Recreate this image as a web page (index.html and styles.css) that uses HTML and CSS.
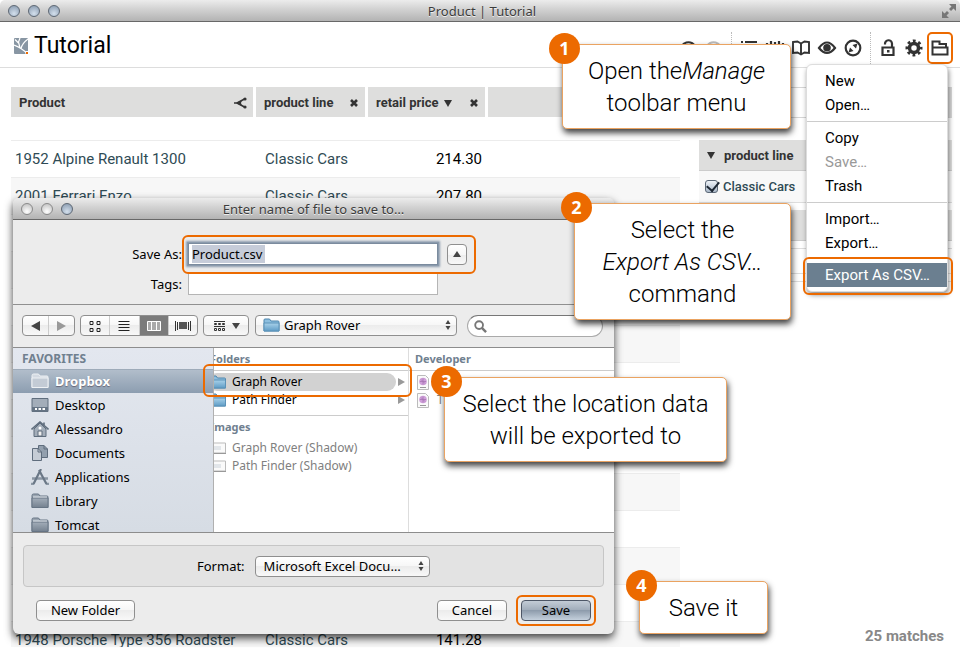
FILE: index.html
```html
<!DOCTYPE html>
<html lang="en">
<head>
<meta charset="utf-8">
<title>Product | Tutorial</title>
<link rel="stylesheet" href="styles.css">
</head>
<body>
<svg class="defs" aria-hidden="true">
  <defs>
    <linearGradient id="blue" x1="0" y1="0" x2="0" y2="1"><stop offset="0" stop-color="#a9d2ea"/><stop offset="1" stop-color="#5f9cc6"/></linearGradient>
    <linearGradient id="slate" x1="0" y1="0" x2="0" y2="1"><stop offset="0" stop-color="#a3adb9"/><stop offset="1" stop-color="#74818f"/></linearGradient>
    <symbol id="folder-slate" viewBox="0 0 18 16"><path d="M1 14.500V2.500Q1 1 2.500 1H7.500L9 3H16Q17 3 17 4V14.500Z" fill="#9aa5b1" stroke="#667484"/><path d="M1 5H17V14.500H1Z" fill="url(#slate)" stroke="#667484"/><path d="M2 4H16" stroke="#dfe4ea"/></symbol>
    <symbol id="folder-blue" viewBox="0 0 16 14"><path d="M.5 13V2Q.5 1 1.500 1H6L7.500 3H14.500Q15.500 3 15.500 4V13Z" fill="#8dbfdf" stroke="#4f86ad"/><path d="M.5 5H15.500V13H.5Z" fill="url(#blue)" stroke="#5b92b8"/></symbol>
    <symbol id="thumb" viewBox="0 0 16 12"><path d="M.5 1H15.500V11H.5Z" fill="#fafafa" stroke="#bbb"/><path d="M3 4H11V8H3Z" fill="#e2e6ea"/><path d="M0 11.500H16" stroke="#999"/></symbol>
    <symbol id="xmlfile" viewBox="0 0 12 15"><path d="M.5.5H8.500L11.500 3.500V14.500H.5Z" fill="#fafafa" stroke="#bbb"/><circle cx="6" cy="6.500" r="3.800" fill="#cf9fd9"/><path d="M6 3.500V9.500M3 6.500H9M4 4.500L8 8.500" stroke="#a674b3" stroke-width=".8"/><path d="M3 12.500H9" stroke="#999"/></symbol>
    <symbol id="updown" viewBox="0 0 6 10"><path d="M3 0L5.500 4H.5ZM3 10L.5 6H5.500Z" fill="#444"/></symbol>
  </defs>
</svg>

<header class="titlebar">
  <span class="lights"><i></i><i></i><i></i></span>
  <span class="title">Product | Tutorial</span>
  <svg class="expand" viewBox="0 0 14 14" aria-hidden="true"><path d="M7 0H14V7L11.500 4.500L9 7L7 5L9.500 2.500ZM7 14H0V7L2.500 9.500L5 7L7 9L4.500 11.500Z" fill="#777"/></svg>
</header>

<div class="toolbar">
  <svg class="logo" viewBox="0 0 14 16" aria-hidden="true"><rect width="14" height="16" rx="1" fill="#8896a3"/><path d="M13 15.500C10 12 5 9 0 7M7 10.500C8 6 10 4 14 1M6 10L4.500 4L6 0M4.500 5L1 1.500" fill="none" stroke="#fff" stroke-width="1.200"/><path d="M11.500 13H14V16H11.500Z" fill="#fff"/><path d="M12 14H14V16H12Z" fill="#ec6a00"/></svg>
  <h1>Tutorial</h1>
  <nav class="tools" aria-label="Toolbar">
    <button aria-label="Undo"><svg viewBox="0 0 20 20"><path d="M4 8A7 6 0 1 1 5 14" /></svg></button>
    <button aria-label="Redo" disabled><svg viewBox="0 0 20 20"><path d="M16 8A7 6 0 1 0 15 14"/></svg></button>
    <i class="sep"></i>
    <button aria-label="List"><svg viewBox="0 0 20 20"><path d="M2 4H4M6 4H18M2 10H4M6 10H18M2 16H4M6 16H18"/></svg></button>
    <button aria-label="Values"><svg viewBox="0 0 20 20"><path d="M2 5V15M6 3V15M10 4V15M14 3V15M18 5V15"/></svg></button>
    <button aria-label="Book"><svg viewBox="0 0 20 20"><path d="M2 4L6.500 3.500L10 5.500L13.500 3.500L18 4V15L13.500 14.500L10 16.500L6.500 14.500L2 15ZM10 5.500V16" stroke-width="1.900"/></svg></button>
    <button aria-label="View"><svg viewBox="0 0 20 20"><path d="M2 10Q10-1 18 10Q10 20 2 10Z"/><circle cx="10" cy="9.800" r="3.800" fill="#333" stroke="none"/></svg></button>
    <button aria-label="Explore"><svg viewBox="0 0 20 20"><circle cx="10" cy="10" r="7.300"/><path d="M14.500 5.500L13 10.500L9.500 7ZM5.500 14.500L7 9.500L10.500 13Z" fill="#333" stroke="none"/></svg></button>
    <i class="sep"></i>
    <button aria-label="Unlock"><svg viewBox="0 0 20 20"><path d="M4.500 9.500H15.500V17H4.500ZM7 6.500V6A3.500 3.500 0 0 1 14 5.500V9"/><path d="M9 12H11.500V14.500H9Z" fill="#333" stroke="none"/></svg></button>
    <button aria-label="Settings"><svg viewBox="0 0 20 20"><circle cx="10" cy="10" r="4.500" stroke-width="3.500"/><circle cx="10" cy="10" r="7" stroke-width="3" stroke-dasharray="2.750 2.750" stroke-dashoffset="1.370"/></svg></button>
    <div class="menu-anchor">
      <button class="manage" aria-label="Manage"><svg viewBox="0 0 20 20"><path d="M2.500 16.500V3.500H9.500V6H16V9M2.500 9.500H17.500V16.500H2.500Z" stroke-width="2"/></svg></button>
      <div class="menu" role="menu">
        <button role="menuitem">New</button>
        <button role="menuitem">Open…</button>
        <hr>
        <button role="menuitem">Copy</button>
        <button role="menuitem" disabled>Save…</button>
        <button role="menuitem">Trash</button>
        <hr>
        <button role="menuitem">Import…</button>
        <button role="menuitem">Export…</button>
        <button role="menuitem" class="active">Export As CSV…<span class="mark"></span></button>
      </div>
    </div>
  </nav>
</div>

<main class="content">
  <div class="grid-wrap">
    <table class="products">
      <colgroup><col class="c-product"><col class="c-line"><col class="c-price"><col></colgroup>
      <thead>
        <tr>
          <th scope="col"><div class="th">Product<svg class="share" viewBox="0 0 13 12" aria-hidden="true"><path d="M3 6L10.500 2M3 6L10.500 10M0 6H5" stroke="#333" stroke-width="1.500"/><path d="M2 6L8 3L7 6L8 9Z" fill="#333"/><circle cx="11" cy="2" r="1.600" fill="#333"/><circle cx="11" cy="10" r="1.600" fill="#333"/></svg></div></th>
          <th scope="col"><div class="th">product line<svg class="x" viewBox="0 0 8 8" aria-hidden="true"><path d="M1 1L7 7M7 1L1 7" stroke="#333" stroke-width="2.600"/></svg></div></th>
          <th scope="col"><div class="th">retail price<svg class="tri" viewBox="0 0 8 7" aria-hidden="true"><path d="M0 0H8L4 7Z" fill="#333"/></svg><svg class="x" viewBox="0 0 8 8" aria-hidden="true"><path d="M1 1L7 7M7 1L1 7" stroke="#333" stroke-width="2.600"/></svg></div></th>
          <th></th>
        </tr>
      </thead>
      <tbody>
        <tr><td>1952 Alpine Renault 1300</td><td>Classic Cars</td><td>214.30</td><td></td></tr>
        <tr><td>2001 Ferrari Enzo</td><td>Classic Cars</td><td>207.80</td><td></td></tr>
        <tr><td></td><td></td><td></td><td></td></tr>
        <tr><td></td><td></td><td></td><td></td></tr>
        <tr><td></td><td></td><td></td><td></td></tr>
        <tr><td></td><td></td><td></td><td></td></tr>
        <tr><td></td><td></td><td></td><td></td></tr>
        <tr><td></td><td></td><td></td><td></td></tr>
        <tr><td></td><td></td><td></td><td></td></tr>
        <tr><td></td><td></td><td></td><td></td></tr>
        <tr><td></td><td></td><td></td><td></td></tr>
        <tr><td></td><td></td><td></td><td></td></tr>
        <tr><td></td><td></td><td></td><td></td></tr>
        <tr><td>1948 Porsche Type 356 Roadster</td><td>Classic Cars</td><td>141.28</td><td></td></tr>
      </tbody>
    </table>
  </div>
  <aside class="filters">
    <div class="bar"></div>
    <section>
      <h2><svg class="tri" viewBox="0 0 8 7" aria-hidden="true"><path d="M0 0H8L4 7Z" fill="#333"/></svg>product line</h2>
      <label class="check"><input type="checkbox" checked>Classic Cars</label>
    </section>
    <section>
      <h2></h2>
      <div class="line"></div>
      <div class="line"></div>
      <div class="line thin"></div>
    </section>
    <p class="matches">25 matches</p>
  </aside>
</main>

<div class="dialog" role="dialog" aria-labelledby="dlg-title">
  <div class="titlebar">
    <span class="lights"><i class="off"></i><i class="off"></i><i></i></span>
    <span class="title" id="dlg-title">Enter name of file to save to…</span>
    <span class="balance"></span>
  </div>
  <form class="names">
    <label for="save-as">Save As:</label>
    <div class="name-row">
      <input id="save-as" class="focused" type="text" value="Product.csv">
      <button type="button" class="btn collapse" aria-label="Collapse"><svg viewBox="0 0 8 6"><path d="M4 0L8 6H0Z" fill="#444"/></svg></button>
      <span class="mark"></span>
    </div>
    <label for="tags">Tags:</label>
    <input id="tags" type="text">
  </form>
  <div class="browse-bar">
    <div class="group nav">
      <button aria-label="Back"><svg viewBox="0 0 9 10"><path d="M9 0V10L0 5Z" fill="#444"/></svg></button>
      <button aria-label="Forward"><svg viewBox="0 0 9 10"><path d="M0 0V10L9 5Z" fill="#999"/></svg></button>
    </div>
    <div class="group views">
      <button aria-label="Icons"><svg class="wide" viewBox="0 0 16 12"><path d="M3 1.500H6V4.500H3ZM10 1.500H13V4.500H10ZM3 8.500H6V11.500H3ZM10 8.500H13V11.500H10Z" fill="none" stroke="#222"/></svg></button>
      <button aria-label="List"><svg class="wide" viewBox="0 0 16 12"><path d="M2.500 1.500H13.500M2.500 4.500H13.500M2.500 7.500H13.500M2.500 10.500H13.500" stroke="#222"/></svg></button>
      <button aria-label="Columns" class="on"><svg class="wide" viewBox="0 0 16 12"><path d="M1.500 1.500H14.500V10.500H1.500ZM5.500 1V11M10.500 1V11" fill="#aaa" stroke="#fff"/></svg></button>
      <button aria-label="Cover flow"><svg class="wide" viewBox="0 0 16 12"><path d="M.5 1V11M2.500 2V10M13.500 2V10M15.500 1V11" stroke="#333"/><path d="M4 2H12V9H4Z" fill="#555"/></svg></button>
    </div>
    <button class="btn arrange" aria-label="Arrange"><svg class="wide" viewBox="0 0 13 12"><path d="M1 1.500H12M1 6.500H12" stroke="#333"/><path d="M1.500 3.500H3.500V4.500H1.500ZM5.500 3.500H7.500V4.500H5.500ZM9.500 3.500H11.500V4.500H9.500ZM1.500 8.500H3.500V10.500H1.500ZM5.500 8.500H7.500V10.500H5.500ZM9.500 8.500H11.500V10.500H9.500Z" fill="none" stroke="#333"/></svg><svg class="caret" viewBox="0 0 8 6"><path d="M0 0H8L4 6Z" fill="#444"/></svg></button>
    <div class="select location">
      <svg class="lead"><use href="#folder-blue"/></svg>
      <select aria-label="Location"><option>Graph Rover</option></select>
      <svg class="arrows"><use href="#updown"/></svg>
    </div>
    <div class="search">
      <svg viewBox="0 0 14 14" aria-hidden="true"><circle cx="5.500" cy="5.500" r="4.200" fill="none" stroke="#777" stroke-width="2"/><path d="M8.500 8.500L13 13" stroke="#777" stroke-width="2.600"/></svg>
      <input type="search" aria-label="Search">
    </div>
  </div>
  <div class="browser">
    <div class="places">
      <h3>FAVORITES</h3>
      <ul>
        <li class="selected"><svg viewBox="0 0 18 16"><path d="M1 14.500V2.500Q1 1 2.500 1H7.500L9 3H16Q17 3 17 4V14.500Z" fill="#d4dae2" stroke="#eef1f4"/><path d="M1 5H17V14.500H1Z" fill="#c3cbd5" stroke="#eef1f4"/></svg>Dropbox</li>
        <li><svg viewBox="0 0 18 16"><path d="M1 1.500H17V14.500H1Z" fill="#a3adb9" stroke="#5f6d7d"/><path d="M1 10H17V14.500H1Z" fill="#667484"/><path d="M4 12H6M7.500 12H10M11.500 12H14" stroke="#fff" stroke-width="2"/></svg>Desktop</li>
        <li><svg viewBox="0 0 18 16"><path d="M3 8V15.500H15V8L9 2Z" fill="#a3adb9" stroke="#5f6d7d"/><path d="M.5 8.500L9 1L17.500 8.500M13 1.500V5" fill="none" stroke="#5f6d7d" stroke-width="1.600"/><path d="M7 10H11V15H7Z" fill="#eee" stroke="#5f6d7d"/><circle cx="9" cy="7" r="1.500" fill="#fff"/></svg>Alessandro</li>
        <li><svg viewBox="0 0 18 16"><path d="M7.500.5H13L16.500 4V12.500H7.500Z" fill="#93a0ae" stroke="#5f6d7d"/><path d="M1.500 3.500H7L10.500 7V15.500H1.500Z" fill="#c5ccd5" stroke="#5f6d7d"/><path d="M7 3.500V7H10.500M13 .5V4H16.500" fill="none" stroke="#5f6d7d"/></svg>Documents</li>
        <li><svg viewBox="0 0 18 16"><path d="M1 9.500H17M0 15H3M15 15H18" stroke="#8b97a4" stroke-width="2.500"/><path d="M10 0L2.500 15M8 1L15.500 15" stroke="#6a7786" stroke-width="2.200"/></svg>Applications</li>
        <li><svg><use href="#folder-slate"/></svg>Library</li>
        <li><svg><use href="#folder-slate"/></svg>Tomcat</li>
      </ul>
    </div>
    <div class="column folders">
      <div class="shifted">
        <h3>Folders</h3>
        <ul>
          <li class="current"><svg><use href="#folder-blue"/></svg><span>Graph Rover</span><b></b></li>
          <li><svg><use href="#folder-blue"/></svg><span>Path Finder</span><b></b></li>
        </ul>
        <h3 class="plain">Images</h3>
        <ul class="dim">
          <li><svg><use href="#thumb"/></svg><span>Graph Rover (Shadow)</span></li>
          <li><svg><use href="#thumb"/></svg><span>Path Finder (Shadow)</span></li>
        </ul>
      </div>
    </div>
    <div class="column files">
      <h3>Developer</h3>
      <ul class="dim">
        <li><svg><use href="#xmlfile"/></svg></li>
        <li><svg><use href="#xmlfile"/></svg><span>T</span></li>
      </ul>
    </div>
    <span class="mark"></span>
  </div>
  <div class="format">
    <label for="format">Format:</label>
    <div class="select">
      <select id="format"><option>Microsoft Excel Docu…</option></select>
      <svg class="arrows"><use href="#updown"/></svg>
    </div>
  </div>
  <div class="actions">
    <button class="btn new-folder">New Folder</button>
    <button class="btn">Cancel</button>
    <button class="btn primary">Save<span class="mark"></span></button>
  </div>
</div>

<div class="callout one"><b>1</b>Open the<em>Manage</em><br>toolbar menu</div>
<div class="callout two"><b>2</b>Select the<br><em>Export As CSV…</em><br>command</div>
<div class="callout three"><b>3</b>Select the location data<br>will be exported to</div>
<div class="callout four"><b>4</b>Save it</div>
</body>
</html>
```
FILE: styles.css
```css
* { box-sizing: border-box; }

body {
  margin: 0;
  position: relative;
  display: flex;
  flex-direction: column;
  height: 100vh;
  overflow: hidden;
  background: #fff;
  font-family: Roboto, sans-serif;
  color: #000;
}

h1, h2, h3, p, ul { margin: 0; padding: 0; }
ul { list-style: none; }
button, input, select { font: inherit; color: inherit; margin: 0; }
.defs { position: absolute; width: 0; height: 0; }

/* Window title bars */
.titlebar {
  display: flex;
  align-items: center;
  position: relative;
  height: 22px;
  flex: none;
  padding: 0 8px;
  background: linear-gradient(#ececec, #d4d4d4 40%, #b3b3b3);
  border-bottom: 1px solid #686868;
  border-radius: 5px 5px 0 0;
  font: 13px/20px "Noto Sans", sans-serif;
  color: #3c3c3c;
}
.title { flex: 1; text-align: center; text-shadow: 0 1px 0 #eee; }
.lights { display: flex; gap: 8px; width: 14px; }
.balance { width: 14px; }
.lights i {
  flex: none;
  width: 12px;
  height: 12px;
  border: 1px solid #5e6874;
  border-radius: 50%;
  background: radial-gradient(circle at 50% 75%, #d3dfec, #8496ab);
}
.lights .off {
  border-color: #8a8a8a;
  background: radial-gradient(circle at 50% 75%, #fff, #bbb);
}
.expand { width: 14px; height: 14px; margin-right: -4px; }

/* Application toolbar */
.toolbar {
  display: flex;
  align-items: center;
  height: 46px;
  flex: none;
  padding: 3px 7px 0 14px;
  border-bottom: 1px solid #ddd;
}
.logo { width: 14px; height: 16px; }
h1 { margin-left: 6px; font-size: 23px; font-weight: 400; line-height: 32px; }
.tools { display: flex; align-items: center; margin-left: auto; padding-top: 3px; }
.tools > button, .manage {
  display: grid;
  place-items: center;
  width: 26px;
  height: 32px;
  padding: 0;
  border: 0;
  background: none;
}
.tools button svg { width: 20px; height: 20px; fill: none; stroke: #333; stroke-width: 2.200px; }
.tools > button:disabled svg { stroke: #bbb; }
.sep { width: 1px; height: 32px; margin: 0 4px; border-left: 1px dotted #bbb; }
.menu-anchor { position: relative; z-index: 2; }
.manage { border: 2px solid #ec6a00; border-radius: 5px; }

.menu {
  position: absolute;
  top: 32px;
  right: 5px;
  width: 142px;
  padding: 4px 0;
  background: #fff;
  border: 1px solid #ddd;
  border-radius: 6px;
  box-shadow: 1px 3px 5px rgba(0, 0, 0, .45);
}
.menu button {
  position: relative;
  display: block;
  width: 100%;
  height: 24px;
  padding: 0 0 0 18px;
  border: 0;
  background: none;
  font-size: 15px;
  line-height: 24px;
  text-align: left;
  white-space: nowrap;
}
.menu button:disabled { color: #999; }
.menu hr { height: 1px; margin: 4px 0; border: 0; background: #ccc; }
.menu .active { margin-top: 8px; background: #6b7f90; color: #fff; }

/* Orange outline laid over a highlighted control */
.mark {
  position: absolute;
  inset: -6px;
  border: 2px solid #ec6a00;
  border-radius: 6px;
  pointer-events: none;
}
.menu .mark { inset: -6px -6px -8px -4px; }

/* Table and filters */
.content {
  display: flex;
  gap: 19px;
  flex: 1;
  min-height: 0;
  padding: 19px 8px 15px 11px;
}
.grid-wrap { flex: 1; min-width: 0; overflow: hidden; }
.products { width: 100%; table-layout: fixed; border-collapse: separate; border-spacing: 0; }
.c-product { width: 245px; }
.c-line { width: 112px; }
.c-price { width: 120px; }
th {
  height: 53px;
  padding: 2px 8px 0;
  border-right: 3px solid #fff;
  border-bottom: 23px solid #fff;
  background: #dededd;
  background-clip: padding-box;
  color: #333;
}
th:last-child { border-right: 0; }
.th { display: flex; align-items: center; gap: 6px; font-size: 13px; line-height: 28px; text-align: left; white-space: nowrap; }
.share { width: 13px; height: 12px; margin-left: auto; margin-right: -2px; }
.x { width: 8px; height: 8px; margin-left: auto; }
.th .x { margin-right: -1px; }
.tri { width: 8px; height: 7px; }
td {
  height: 37px;
  padding: 0 4px;
  border-top: 1px solid #ececec;
  font-size: 15px;
  line-height: 20px;
  color: #2f4b55;
  white-space: nowrap;
}
td:nth-child(2) { padding-left: 9px; }
td:nth-child(3) { padding-right: 6px; text-align: right; color: #000; }
tr:nth-child(even) td { background: #f7f7f7; }

.filters { display: flex; flex-direction: column; width: 253px; flex: none; }
.bar { height: 31px; margin-bottom: 22px; border: 1px solid #d5d5d5; border-right: 4px solid #d9d9d9; }
.filters section { margin-bottom: 7px; }
.filters h2 {
  display: flex;
  align-items: center;
  gap: 9px;
  height: 31px;
  padding-left: 8px;
  background: #dededd;
  border-bottom: 1px solid #ccc;
  font-size: 13px;
  color: #333;
}
.check {
  display: flex;
  align-items: center;
  gap: 5px;
  height: 32px;
  padding-left: 6px;
  background: #f8f8f8;
  border-bottom: 1px solid #ddd;
  font-size: 13px;
  font-weight: 500;
  color: #2f4b55;
}
.check input {
  width: 13px;
  height: 13px;
  appearance: none;
  border: 1px solid #5c6876;
  border-radius: 3px;
  background: linear-gradient(#eef2f7, #aab8c8);
  position: relative;
}
.check input:checked::after {
  content: "";
  position: absolute;
  left: 3px;
  top: -2px;
  width: 6px;
  height: 10px;
  border: solid #1d2733;
  border-width: 0 2px 2px 0;
  transform: rotate(40deg);
}
.line { height: 8px; border-bottom: 1px solid #ddd; }
.line + .line { height: 25px; }
.line + .thin { height: 8px; }
.matches { margin: auto 8px 0 auto; font-size: 15px; font-weight: 700; line-height: 22px; color: #888; }

/* Save dialog */
.dialog {
  position: absolute;
  left: 13px;
  top: 198px;
  width: 601px;
  background: #ececec;
  border-radius: 6px;
  box-shadow: 0 4px 9px rgba(0, 0, 0, .75);
  font: 13px/18px "Noto Sans", sans-serif;
}
.names {
  display: grid;
  grid-template-columns: 169px 250px;
  gap: 8px 6px;
  align-items: center;
  padding: 23px 0 9px;
}
.names label { text-align: right; }
.names input {
  width: 100%;
  height: 22px;
  padding: 0 3px;
  background: #fff;
  border: 1px solid #b5b5b5;
  border-top-color: #888;
}
.name-row { position: relative; display: flex; align-items: center; gap: 9px; width: 279px; }
.names .focused {
  flex: 1;
  border: 1px solid #7b8b9e;
  box-shadow: 0 0 0 1px #8b9bad, 0 0 2px 2px #8b9bad;
  outline: 0;
  background: linear-gradient(#c6ccd9, #c6ccd9) 3px 50% / 73px 18px no-repeat #fff;
}
.name-row .mark { inset: -8px -9px -9px -6px; }

.btn, .group, .select select {
  height: 21px;
  background: linear-gradient(#fff, #f6f6f6 50%, #ececec 50%, #f8f8f8);
  border: 1px solid #8f8f8f;
  border-radius: 4px;
}
.btn { position: relative; padding: 0; line-height: 19px; }
.collapse { display: grid; place-items: center; width: 20px; }
.collapse svg { width: 8px; height: 6px; }

.browse-bar {
  display: flex;
  gap: 5px;
  padding: 10px 11px 10px 9px;
  border-top: 1px solid #909090;
}
.group { display: flex; flex: none; overflow: hidden; }
.group button {
  display: grid;
  place-items: center;
  flex: 1;
  padding: 0;
  border: 0;
  border-left: 1px solid #ccc;
  background: none;
}
.group button:first-child { border-left: 0; }
.group .on { background: #7b7b7b; }
.nav { width: 53px; }
.nav svg { width: 9px; height: 10px; }
.views { width: 118px; }
.wide { width: 16px; height: 12px; }
.arrange { display: flex; flex: none; align-items: center; justify-content: center; gap: 6px; width: 46px; }
.arrange .wide { width: 13px; }
.caret { width: 8px; height: 6px; }
.select { position: relative; flex: none; }
.select select {
  display: block;
  width: 175px;
  padding: 0 20px 0 8px;
  appearance: none;
  line-height: 17px;
}
.location { margin: 0 5px 0 1px; }
.location select { width: 202px; padding-left: 28px; }
.lead, .arrows { position: absolute; pointer-events: none; }
.lead { left: 8px; top: 3px; width: 17px; height: 14px; }
.arrows { right: 6px; top: 5px; width: 6px; height: 10px; }
.search {
  display: flex;
  align-items: center;
  flex: 1;
  min-width: 0;
  height: 22px;
  padding: 0 6px;
  background: #fff;
  border: 1px solid #aaa;
  border-top-color: #777;
  border-radius: 11px;
}
.search svg { width: 13px; height: 13px; flex: none; }
.search input { flex: 1; width: 0; min-width: 0; height: 18px; padding: 0; border: 0; outline: 0; background: none; }

.browser {
  position: relative;
  display: flex;
  height: 186px;
  border: 1px solid #8d8d8d;
  border-width: 1px 0;
  background: #fff;
}
.browser > .mark { inset: 16px auto auto 190px; width: 209px; height: 33px; }
.browser h3 { font-size: 11px; line-height: 21px; color: #70808f; }
.browser svg { flex: none; }
.places {
  width: 201px;
  overflow: hidden;
  background: linear-gradient(#e3e7ef, #d6dce4);
  border-right: 1px solid #b0b0b0;
}
.places h3 { padding-left: 9px; font-size: 12px; }
.places li { display: flex; align-items: center; gap: 6px; height: 24px; padding-left: 18px; }
.places svg { width: 18px; height: 16px; }
.places .selected {
  background: linear-gradient(#b3bfcc, #8c9db0);
  box-shadow: inset 0 1px 0 #9eabb9;
  color: #fff;
  font-weight: 700;
  text-shadow: 0 1px 1px #667;
}
.column { overflow: hidden; font-size: 12px; }
.folders { width: 195px; border-right: 1px solid #ddd; }
.files { flex: 1; }
.shifted { margin-left: -6px; }
.column h3 { height: 23px; padding-left: 2px; border-bottom: 1px solid #ccc; }
.column .plain { border-bottom: 0; }
.column ul { padding: 2px 0 6px; }
.column li { display: flex; align-items: center; gap: 6px; height: 18px; padding-left: 2px; }
.folders svg { width: 16px; height: 14px; }
.folders ul:first-of-type { border-bottom: 1px solid #ccc; }
.column .dim { color: #808080; border: 0; }
.folders .dim { padding-top: 0; }
.files h3 { padding-left: 6px; }
.files li { padding-left: 8px; gap: 8px; }
.files svg { width: 12px; height: 15px; }
.current { position: relative; isolation: isolate; }
.current::before {
  content: "";
  position: absolute;
  z-index: -1;
  inset: 0 12px 0 0;
  border-radius: 9px;
  background: #d2d2d2;
}
.column li b {
  margin-left: auto;
  margin-right: 3px;
  border: 4px solid transparent;
  border-left: 7px solid #999;
  border-right: 0;
}

.format {
  display: flex;
  align-items: center;
  gap: 10px;
  height: 42px;
  margin: 12px 10px 0;
  padding-left: 173px;
  background: #e3e3e3;
  border: 1px solid #c6c6c6;
  border-radius: 4px;
}
.actions { display: flex; gap: 14px; padding: 13px 23px; }
.actions .btn { width: 70px; }
.actions .new-folder { width: 99px; margin-right: auto; }
.actions .primary {
  background: linear-gradient(#c3ccd6, #9fabb9 50%, #8e9cac 50%, #c4d0dc);
  border-color: #4d5666;
}

/* Step callouts */
.callout {
  position: absolute;
  z-index: 3;
  padding: 10px 16px 9px;
  background: #fff;
  border: 1px solid #eaa361;
  border-radius: 5px;
  box-shadow: 1px 4px 6px rgba(0, 0, 0, .75);
  font-size: 24px;
  font-weight: 300;
  line-height: 32px;
  text-align: center;
  white-space: nowrap;
}
.callout b {
  position: absolute;
  left: -14px;
  top: -12px;
  width: 31px;
  height: 31px;
  border-radius: 50%;
  background: #ec6a00;
  color: #fff;
  font: 700 18px/31px "Open Sans", sans-serif;
}
.one { left: 562px; top: 44px; width: 229px; }
.two { left: 574px; top: 203px; width: 217px; }
.three { left: 444px; top: 377px; width: 283px; }
.four { left: 639px; top: 581px; width: 129px; }
```
